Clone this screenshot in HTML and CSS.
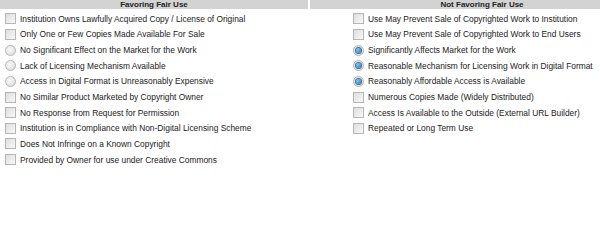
FILE: index.html
```html
<!DOCTYPE html>
<html lang="en">
<head>
  <meta charset="UTF-8" />
  <title>Fair Use Checklist</title>
  <link rel="stylesheet" href="styles.css">
</head>
<body>

  <div class="checklist">
    <div class="column favoring">
      <div class="col-head">Favoring Fair Use</div>
      <ul class="items">
        <li><span class="box"></span>Institution Owns Lawfully Acquired Copy / License of Original</li>
        <li><span class="box"></span>Only One or Few Copies Made Available For Sale</li>
        <li><span class="radio"></span>No Significant Effect on the Market for the Work</li>
        <li><span class="radio"></span>Lack of Licensing Mechanism Available</li>
        <li><span class="radio"></span>Access in Digital Format is Unreasonably Expensive</li>
        <li><span class="box"></span>No Similar Product Marketed by Copyright Owner</li>
        <li><span class="box"></span>No Response from Request for Permission</li>
        <li><span class="box"></span>Institution is in Compliance with Non-Digital Licensing Scheme</li>
        <li><span class="box"></span>Does Not Infringe on a Known Copyright</li>
        <li><span class="box"></span>Provided by Owner for use under Creative Commons</li>
      </ul>
    </div>

    <div class="column opposing">
      <div class="col-head">Not Favoring Fair Use</div>
      <ul class="items">
        <li><span class="box"></span>Use May Prevent Sale of Copyrighted Work to Institution</li>
        <li><span class="box"></span>Use May Prevent Sale of Copyrighted Work to End Users</li>
        <li><span class="radio checked"></span>Significantly Affects Market for the Work</li>
        <li><span class="radio checked"></span>Reasonable Mechanism for Licensing Work in Digital Format</li>
        <li><span class="radio checked"></span>Reasonably Affordable Access is Available</li>
        <li><span class="box"></span>Numerous Copies Made (Widely Distributed)</li>
        <li><span class="box"></span>Access Is Available to the Outside (External URL Builder)</li>
        <li><span class="box"></span>Repeated or Long Term Use</li>
      </ul>
    </div>
  </div>

</body>
</html>
```

FILE: styles.css
```css
* {
  margin: 0; padding: 0;
  box-sizing: border-box;
}

body {
  background: white;
  font-family: 'Liberation Sans', Arial, sans-serif;
  color: #222;
}

.checklist {
  display: grid;
  grid-template-columns: 308px 1fr;
  column-gap: 2px;
}

.col-head {
  background: #d3d3d3;
  height: 9px;
  font-size: 8px;
  line-height: 9px;
  font-weight: bold;
  text-align: center;
  color: #222;
}

.opposing .col-head {
  padding-left: 54px;
}

.items {
  list-style: none;
  padding-top: 2px;
}

.favoring .items {
  padding-left: 5px;
}

.opposing .items {
  padding-left: 43px;
}

.items li {
  display: flex;
  align-items: center;
  height: 15.65px;
  font-size: 8.4px;
  white-space: nowrap;
}

.box {
  width: 11px;
  height: 11px;
  margin-right: 4px;
  border: 1px solid #b6b6b6;
  background: linear-gradient(135deg, #dedede, #f8f8f8);
  flex-shrink: 0;
}

.radio {
  width: 11px;
  height: 11px;
  margin-right: 4px;
  border: 1px solid #b4b4b4;
  border-radius: 50%;
  background: radial-gradient(circle at 40% 40%, #fafafa, #d8d8d8);
  flex-shrink: 0;
  display: flex;
  align-items: center;
  justify-content: center;
}

.radio.checked::after {
  content: "";
  width: 5px;
  height: 5px;
  border-radius: 50%;
  background: radial-gradient(circle at 35% 35%, #7fc6f0, #1f6fb8);
  box-shadow: 0 0 0 1px #3a6f96;
}
```
